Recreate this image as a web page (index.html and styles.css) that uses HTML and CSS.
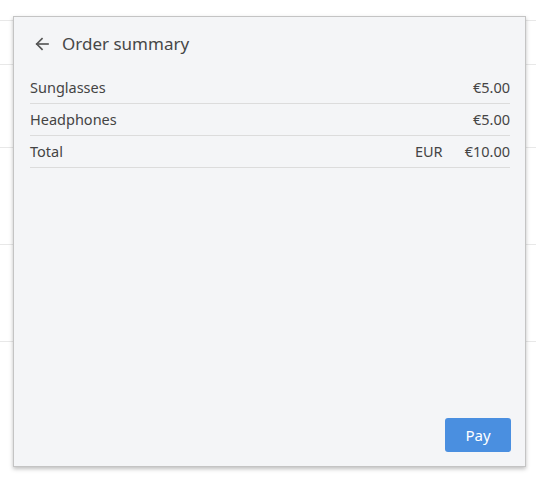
FILE: index.html
```html
<!DOCTYPE html>
<html>
<head>
<meta charset="utf-8">
<link rel="stylesheet" href="styles.css">
</head>
<body>
<div class="page">
  <div class="bg-row r1"></div>
  <div class="bg-row r2"></div>
  <div class="bg-row r3"></div>
  <div class="bg-row r4"></div>
  <div class="bg-row r5"></div>
</div>
<div class="panel">
  <div class="header">
    <svg class="back" width="18" height="18" viewBox="0 0 24 24" fill="none" stroke="#555" stroke-width="2.2" stroke-linecap="square"><path d="M20 12H5"/><path d="M12 5l-7 7 7 7"/></svg>
    <span class="title">Order summary</span>
  </div>
  <div class="rows">
    <div class="row"><span class="name">Sunglasses</span><span class="amt">€5.00</span></div>
    <div class="row"><span class="name">Headphones</span><span class="amt">€5.00</span></div>
    <div class="row"><span class="name">Total</span><span class="cur">EUR</span><span class="amt">€10.00</span></div>
  </div>
  <div class="footer"><button class="pay">Pay</button></div>
</div>
</body>
</html>
```
FILE: styles.css
```css
html, body { margin: 0; padding: 0; background: #fff; }
body { font-family: "Noto Sans", "Open Sans", sans-serif; color: #444; width: 536px; height: 481px; overflow: hidden; }
.page { display: flex; flex-direction: column; }
.bg-row { border-bottom: 1px solid #e8e8e8; }
.r1 { height: 20px; }
.r2 { height: 43px; }
.r3 { height: 82px; }
.r4 { height: 96px; }
.r5 { height: 96px; }
.panel {
  position: absolute; left: 13px; top: 16px; width: 513px; height: 451px; box-sizing: border-box;
  background: #f4f5f7; border: 1px solid #c4c4c4;
  box-shadow: 0 2px 4px rgba(0,0,0,0.25);
  display: flex; flex-direction: column; padding: 0 15px 14px 16px;
}
.header { display: flex; align-items: center; height: 55px; padding-bottom: 2px; box-sizing: border-box; }
.back { margin-left: 3px; margin-right: 11px; }
.title { font-size: 17px; color: #474747; }
.rows { display: flex; flex-direction: column; }
.row { display: flex; align-items: center; height: 31px; padding-bottom: 1px; box-sizing: content-box; height: 30px; border-bottom: 1px solid #dcdcdc; font-size: 14.5px; color: #444; }
.name { flex: 1; }
.cur { margin-right: 22px; }
.footer { margin-top: auto; display: flex; justify-content: flex-end; }
.pay {
  width: 66px; height: 34px; background: #4a8fe0; color: #fff; border: none; border-radius: 3px;
  font-family: inherit; font-size: 15px; margin-right: -1px;
}
```
